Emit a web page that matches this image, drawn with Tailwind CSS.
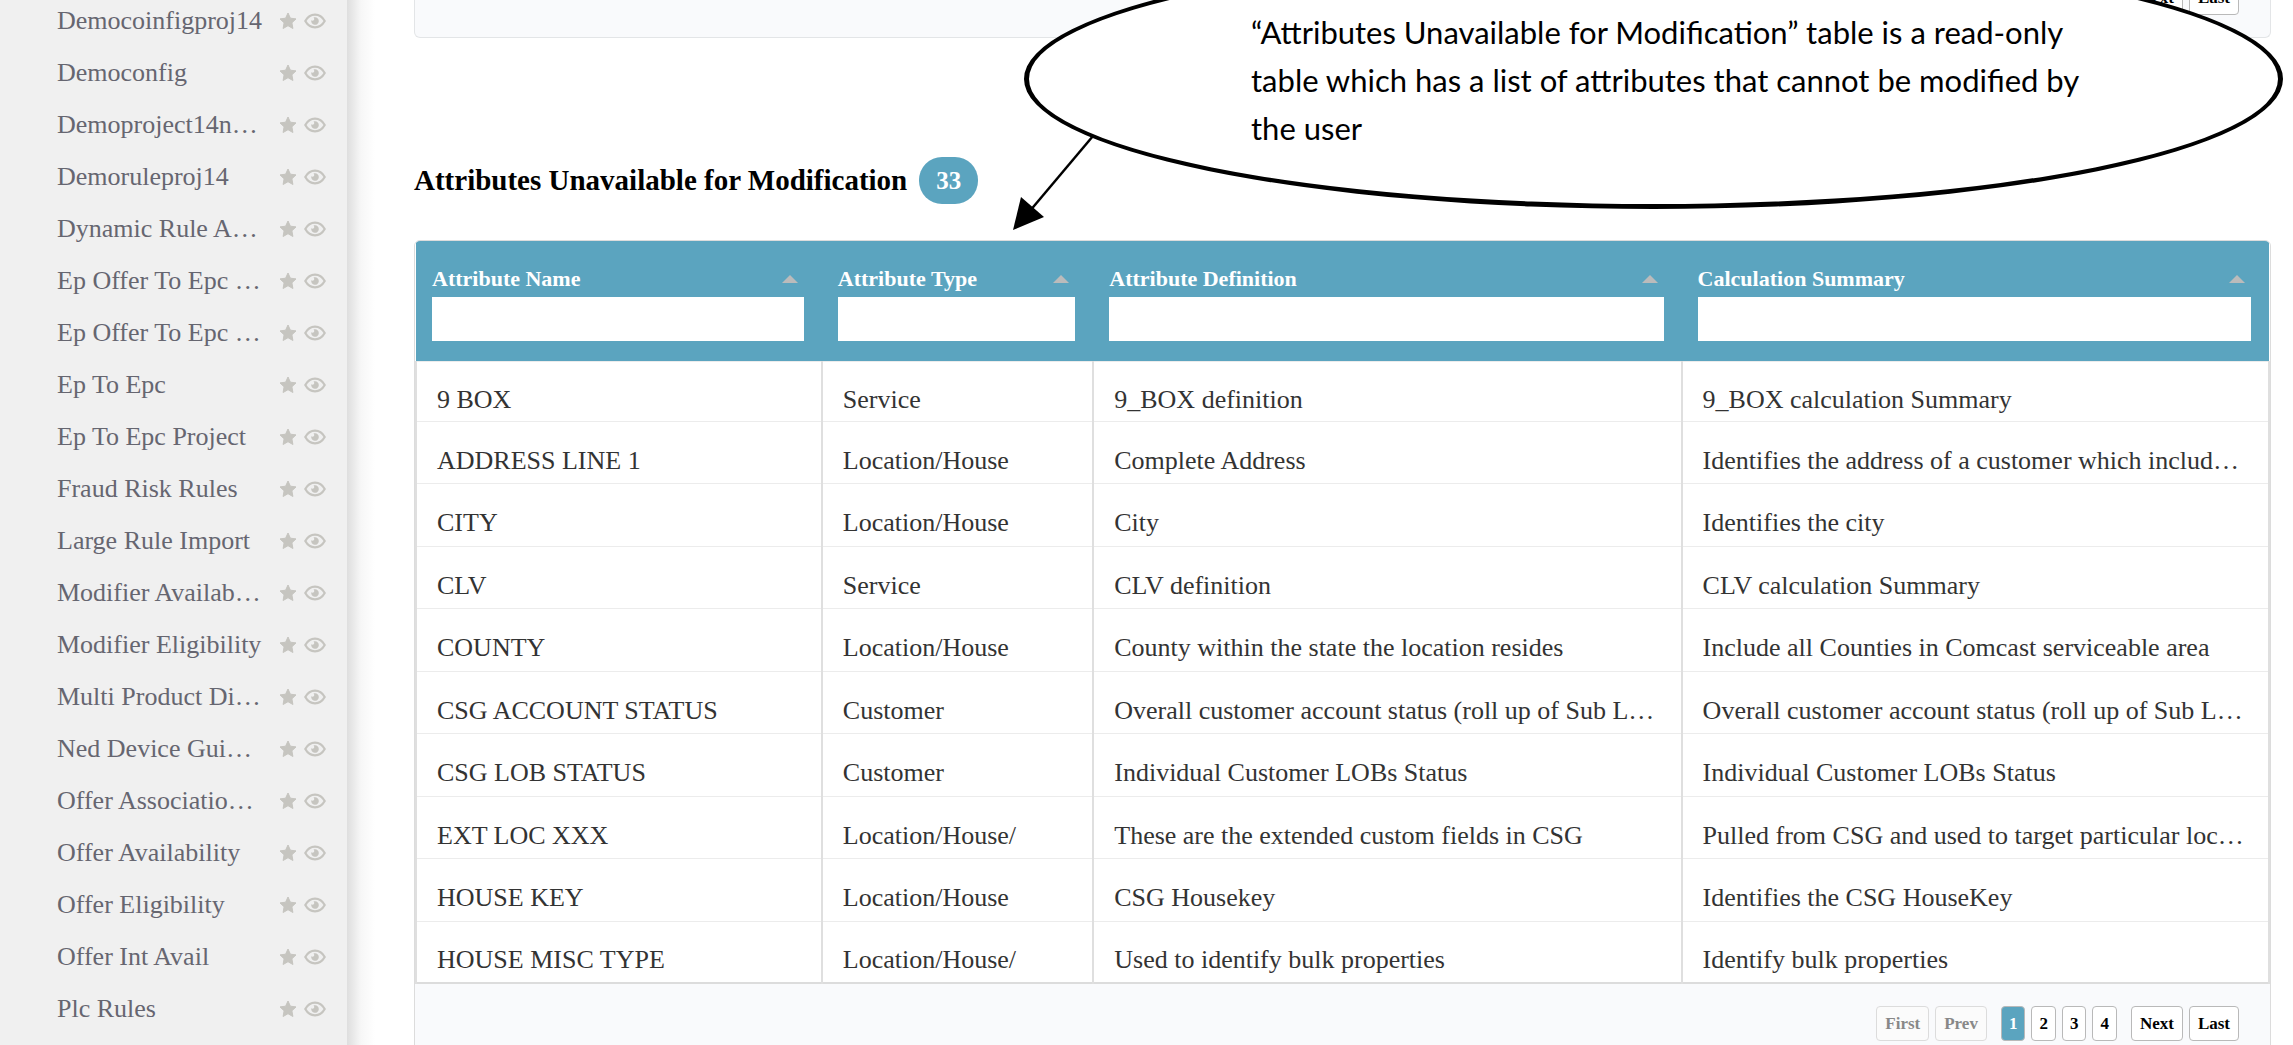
<!DOCTYPE html>
<html lang="en">

<head>
    <meta charset="utf-8" />
    <meta content="width=device-width, initial-scale=1.0" name="viewport" />
    <title>Attributes</title>
    <script src="https://cdn.jsdelivr.net/npm/@tailwindcss/browser@4"></script>
</head>

<body class="bg-white font-['Liberation_Serif',serif] flex h-screen overflow-hidden">
    <svg class="hidden">
        <symbol id="star" viewBox="0 0 18 18">
            <path fill="currentColor" stroke="currentColor" stroke-linejoin="round"
                d="M9 1l2.400 5.200 5.600.7-4.100 3.900 1 5.700L9 13.700l-4.900 2.800 1-5.700L1 6.900l5.600-.7z" />
        </symbol>
        <symbol id="eye" viewBox="0 0 22 16">
            <path fill="none" stroke="currentColor" stroke-width="2.200"
                d="M1.300 8C3.500 4 7 1.700 11 1.700S18.500 4 20.700 8C18.500 12 15 14.300 11 14.300S3.500 12 1.300 8z" />
            <path fill="currentColor" d="M11 4.200a3.800 3.800 0 1 1-3.700 3c.8.7 2 .6 2.600-.1.600-.8.400-2-.4-2.600.5-.2 1-.3 1.500-.3z" />
        </symbol>
    </svg>

    <!-- Sidebar -->
    <aside class="w-[347px] shrink-0 bg-[#f0f0f0] text-[#666670]">
        <ul id="projects" class="-mt-[5px]"></ul>
    </aside>

    <!-- Main -->
    <main class="relative flex-1 min-w-0 pl-[67px] pr-[22px] overflow-hidden">
        <div class="absolute inset-y-0 left-0 w-7 bg-linear-to-r from-[#dedede] via-[#f7f7f7] to-white"></div>

        <div class="-mt-5 border border-t-0 border-[#e3e5e7] rounded-b-md bg-[#f9fafc] pb-[22px] pr-[31px] flex justify-end gap-[6px] text-[17px] font-bold">
            <button class="h-[35px] px-2 border border-[#b9b9b9] rounded bg-white">Next</button>
            <button class="h-[35px] px-2 border border-[#b9b9b9] rounded bg-white">Last</button>
        </div>

        <div class="flex items-center gap-3 mt-[119px] mb-9">
            <h2 class="text-[29px] leading-[47px] font-bold">Attributes Unavailable for Modification</h2>
            <span class="h-[47px] px-[17px] rounded-[23px] bg-[#5ba4bf] text-white text-[25px] leading-[47px] font-bold">33</span>
        </div>

        <div class="border border-[#dcdcdc] rounded-t-md overflow-hidden bg-[#f9fafc]">
            <table class="w-full table-fixed border-collapse bg-white">
                <colgroup>
                    <col class="w-[21.9%]">
                    <col class="w-[14.65%]">
                    <col>
                    <col class="w-[31.7%]">
                </colgroup>
                <thead class="bg-[#5ba4bf] text-white">
                    <tr id="columns"></tr>
                </thead>
                <tbody id="attributes" class="text-[#333] border-b-2 border-[#dcdcdc]"></tbody>
            </table>
            <div class="pt-[22px] pb-[22px] pr-[31px] flex justify-end gap-[6px] text-[17px] font-bold">
                <button class="h-[35px] px-2 border border-[#dcdcdc] rounded bg-[#fbfbfb] text-[#888]" disabled>First</button>
                <button class="h-[35px] px-2 border border-[#dcdcdc] rounded bg-[#fbfbfb] text-[#888]" disabled>Prev</button>
                <div class="flex gap-[6px] mx-2">
                    <button class="h-[35px] px-[7px] border border-[#b9b9b9] rounded bg-[#5ba4bf] text-white">1</button>
                    <button class="h-[35px] px-[7px] border border-[#b9b9b9] rounded bg-white">2</button>
                    <button class="h-[35px] px-[7px] border border-[#b9b9b9] rounded bg-white">3</button>
                    <button class="h-[35px] px-[7px] border border-[#b9b9b9] rounded bg-white">4</button>
                </div>
                <button class="h-[35px] px-2 border border-[#b9b9b9] rounded bg-white">Next</button>
                <button class="h-[35px] px-2 border border-[#b9b9b9] rounded bg-white">Last</button>
            </div>
        </div>

        <!-- Callout -->
        <div class="absolute left-[677px] right-[10px] -top-[51px] h-[260px] border-[5px] border-black rounded-[50%] bg-white pt-[54px] pl-[222px]">
            <p class="font-['Lato',sans-serif] text-[31px] leading-[48px] whitespace-nowrap">
                “Attributes Unavailable for Modification” table is a read-only<br>
                table which has a list of attributes that cannot be modified by<br>
                the user
            </p>
        </div>
        <svg class="absolute left-[664px] top-[134px] w-[84px] h-[98px]" viewBox="0 0 84 98">
            <path d="M82 2L18 78" stroke="#000" stroke-width="2.500" />
            <path d="M2 96L10 63L33 83z" />
        </svg>
    </main>

    <script>
        const projects = [
            'Democoinfigproj14', 'Democonfig', 'Demoproject14n…', 'Demoruleproj14', 'Dynamic Rule A…',
            'Ep Offer To Epc …', 'Ep Offer To Epc …', 'Ep To Epc', 'Ep To Epc Project', 'Fraud Risk Rules',
            'Large Rule Import', 'Modifier Availab…', 'Modifier Eligibility', 'Multi Product Di…', 'Ned Device Gui…',
            'Offer Associatio…', 'Offer Availability', 'Offer Eligibility', 'Offer Int Avail', 'Plc Rules'
        ];

        const columns = ['Attribute Name', 'Attribute Type', 'Attribute Definition', 'Calculation Summary'];

        const attributes = [
            ['9 BOX', 'Service', '9_BOX definition', '9_BOX calculation Summary'],
            ['ADDRESS LINE 1', 'Location/House', 'Complete Address', 'Identifies the address of a customer which includ…'],
            ['CITY', 'Location/House', 'City', 'Identifies the city'],
            ['CLV', 'Service', 'CLV definition', 'CLV calculation Summary'],
            ['COUNTY', 'Location/House', 'County within the state the location resides', 'Include all Counties in Comcast serviceable area'],
            ['CSG ACCOUNT STATUS', 'Customer', 'Overall customer account status (roll up of Sub L…', 'Overall customer account status (roll up of Sub L…'],
            ['CSG LOB STATUS', 'Customer', 'Individual Customer LOBs Status', 'Individual Customer LOBs Status'],
            ['EXT LOC XXX', 'Location/House/', 'These are the extended custom fields in CSG', 'Pulled from CSG and used to target particular loc…'],
            ['HOUSE KEY', 'Location/House', 'CSG Housekey', 'Identifies the CSG HouseKey'],
            ['HOUSE MISC TYPE', 'Location/House/', 'Used to identify bulk properties', 'Identify bulk properties']
        ];

        document.getElementById('projects').innerHTML = projects.map(name => `
            <li class="flex items-center h-[52px] pl-[57px]">
                <a href="#" class="w-[222px] text-[26px] leading-[52px] whitespace-nowrap">${name}</a>
                <button class="text-[#c6c5c0] mr-[7px]" aria-label="Favourite"><svg class="w-[18px] h-[18px]"><use href="#star" /></svg></button>
                <button class="text-[#c6c5c0]" aria-label="Show"><svg class="w-[22px] h-[16px]"><use href="#eye" /></svg></button>
            </li>`).join('');

        document.getElementById('columns').innerHTML = columns.map((title, i) => `
            <th class="h-[120px] pt-[26px] pl-4 pr-[18px] text-left align-top text-[22px] leading-[24px]">
                <label for="filter${i}" class="flex items-center justify-between pr-[6px]">${title}
                    <svg class="w-4 h-2" viewBox="0 0 16 8"><path fill="#bbb" d="M8 0l8 8H0z" /></svg>
                </label>
                <input id="filter${i}" type="text" class="block w-full h-[44px] mt-[6px] px-2 bg-white text-[#333] font-normal" />
            </th>`).join('');

        document.getElementById('attributes').innerHTML = attributes.map((row, i) => `
            <tr class="${i === 0 ? 'h-[60px]' : 'odd:h-[63px] even:h-[62px]'} border-t border-[#ececec]">
                ${row.map(cell => `<td class="pt-[17px] pl-5 border-x-2 border-[#dfdfdf] text-[26px] leading-[30px] whitespace-nowrap overflow-hidden">${cell}</td>`).join('')}
            </tr>`).join('');
    </script>
</body>

</html>
